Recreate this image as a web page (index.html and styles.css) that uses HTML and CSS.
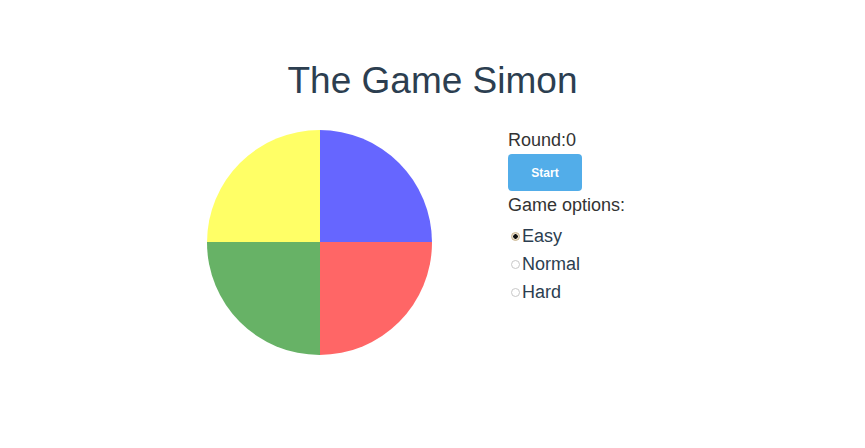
FILE: index.html
```html
<!DOCTYPE html>
<html>
<head>
<meta charset="utf-8">
<title>The Game Simon</title>
<link rel="stylesheet" href="styles.css">
</head>
<body>
<h1 class="title">The Game Simon</h1>
<main class="game">
  <div class="board">
    <div class="pad pad-yellow"></div>
    <div class="pad pad-blue"></div>
    <div class="pad pad-green"></div>
    <div class="pad pad-red"></div>
  </div>
  <div class="panel">
    <div class="round">Round:0</div>
    <button class="start">Start</button>
    <div class="options-label">Game options:</div>
    <label class="option"><input type="radio" name="mode" checked><span>Easy</span></label>
    <label class="option"><input type="radio" name="mode"><span>Normal</span></label>
    <label class="option"><input type="radio" name="mode"><span>Hard</span></label>
  </div>
</main>
</body>
</html>
```
FILE: styles.css
```css
html, body {
  margin: 0;
  padding: 0;
  background: #fff;
}
body {
  font-family: "Liberation Sans", Arial, sans-serif;
  color: #333;
}
.title {
  margin: 60px 0 0;
  text-align: center;
  font-size: 37px;
  font-weight: 400;
  line-height: 42px;
  color: #2c3e50;
}
.game {
  display: flex;
  justify-content: center;
  gap: 76px;
  margin-top: 28px;
}
.board {
  width: 225px;
  height: 225px;
  border-radius: 50%;
  overflow: hidden;
  display: grid;
  grid-template-columns: 113px 112px;
  grid-template-rows: 112px 113px;
}
.pad-yellow { background: #ffff66; }
.pad-blue { background: #6666ff; }
.pad-green { background: #67b266; }
.pad-red { background: #ff6666; }
.panel {
  width: 150px;
  display: flex;
  flex-direction: column;
  align-items: flex-start;
  font-size: 18px;
  color: #333;
}
.round {
  line-height: 21px;
}
.start {
  margin-top: 3px;
  width: 74px;
  height: 37px;
  border: none;
  border-radius: 4px;
  background: #52ade9;
  color: #fff;
  font-family: "Liberation Sans", Arial, sans-serif;
  font-size: 12px;
  font-weight: 700;
  padding: 0;
}
.options-label {
  margin-top: 4px;
  line-height: 21px;
}
.option {
  display: flex;
  align-items: center;
  height: 28px;
  color: #2c3e50;
}
.option:first-of-type {
  margin-top: 6px;
}
.option input {
  appearance: none;
  -webkit-appearance: none;
  margin: 1px 2px 0 3px;
  width: 9px;
  height: 9px;
  border: 1px solid #c8c8c8;
  border-radius: 50%;
  box-sizing: border-box;
  background: #fff;
}
.option input:checked {
  border-color: #c9b38c;
  background: radial-gradient(circle, #111 0 2px, #e9e0cf 2.5px);
}
```
